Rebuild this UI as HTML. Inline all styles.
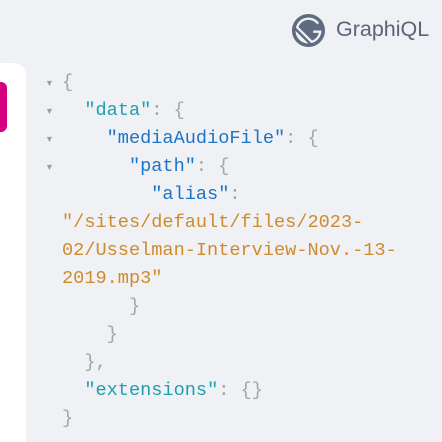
<!DOCTYPE html>
<html><head><style>
html,body{margin:0;padding:0;width:442px;height:442px;overflow:hidden;background:#f0f1f4;}
body{position:relative;font-family:"Liberation Sans",sans-serif;}
.left{position:absolute;left:0;top:63px;width:26px;height:400px;background:#fff;border-top-right-radius:12px;}
.pink{position:absolute;left:0;top:82px;width:7px;height:50px;background:#d6007f;border-radius:0 6px 6px 0;}
.logo{position:absolute;left:292px;top:14px;width:33px;height:33px;}
.title{position:absolute;left:336px;top:17px;font-size:21.5px;color:#5a6377;}
.code{position:absolute;left:62px;top:69px;font-family:"Liberation Mono",monospace;font-size:18.6px;line-height:28px;white-space:pre;color:#a0a5ae;}
.arr{position:absolute;left:45px;font-size:9px;color:#9aa0aa;}
.t{color:#1e9faf}.b{color:#1b74c8}.s{color:#d08a2e}
</style></head><body>
<div class="left"></div><div class="pink"></div>
<svg class="logo" viewBox="0 0 28 28"><path fill="#5f6b80" d="M14 0C6.3 0 0 6.3 0 14s6.3 14 14 14 14-6.3 14-14S21.7 0 14 0zM6.2 21.8C4.1 19.7 3 16.9 3 14.2L13.9 25c-2.8-.1-5.6-1.1-7.7-3.2zm10.2 2.9L3.3 11.6C4.4 6.7 8.8 3 14 3c3.700 0 6.9 1.8 8.9 4.5l-1.5 1.3C19.7 6.5 17 5 14 5c-3.9 0-7.2 2.5-8.5 6L17 22.5c2.9-1 5.1-3.5 5.8-6.5H18v-2h7c0 5.2-3.7 9.6-8.6 10.7z"/></svg>
<div class="title">GraphiQL</div>
<div class="arr" style="top:78px">▼</div>
<div class="arr" style="top:106px">▼</div>
<div class="arr" style="top:134px">▼</div>
<div class="arr" style="top:162px">▼</div>
<div class="code">{
  <span class="t">"data"</span>: {
    <span class="b">"mediaAudioFile"</span>: {
      <span class="b">"path"</span>: {
        <span class="b">"alias"</span>:
<span class="s">"/sites/default/files/2023-
02/Usselman-Interview-Nov.-13-
2019.mp3"</span>
      }
    }
  },
  <span class="t">"extensions"</span>: {}
}</div>
</body></html>
